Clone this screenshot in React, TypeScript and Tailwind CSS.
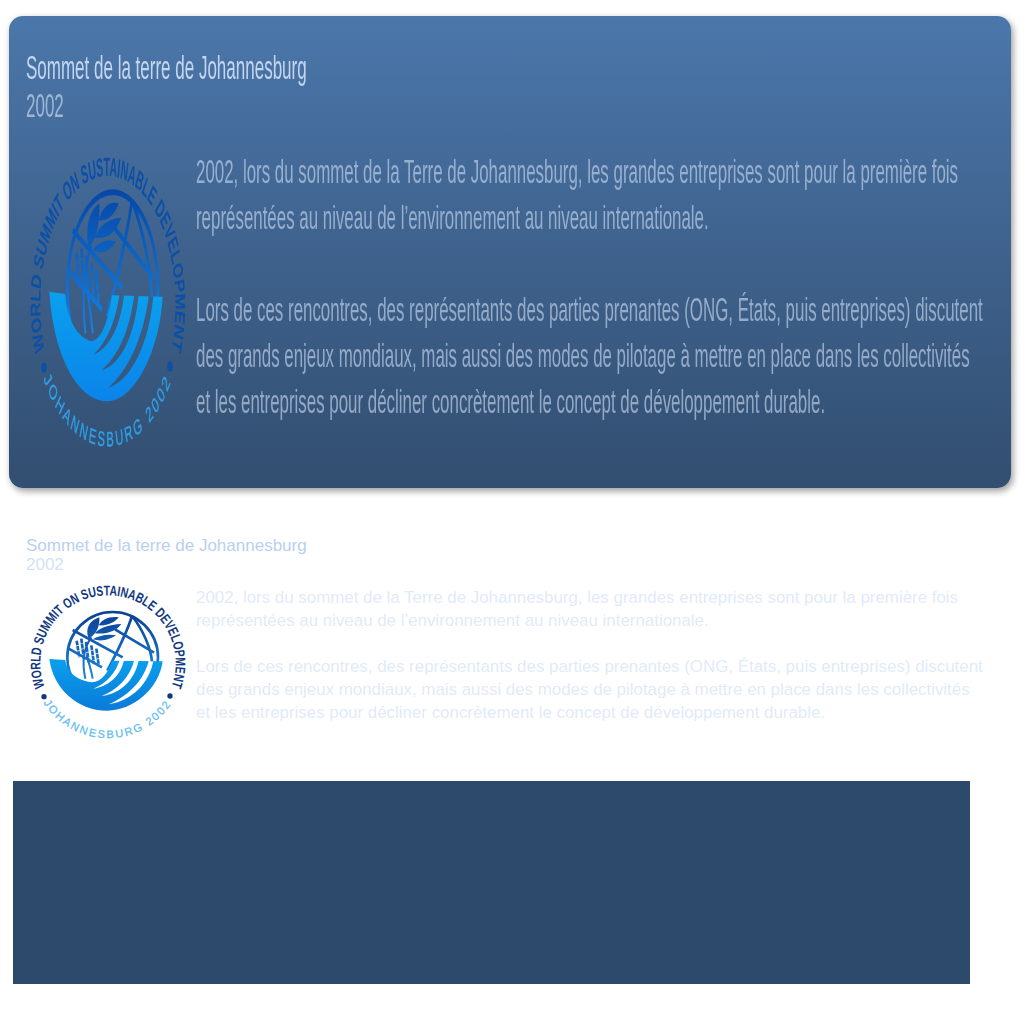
import React from 'react';

type LogoProps = { id: string; stretched?: boolean };

const Logo: React.FC<LogoProps> = ({ id, stretched }) => {
  const ringColor = stretched ? '#0b4fa6' : '#12397f';
  const cityColor = stretched ? '#2f9fe8' : '#62bdf0';
  const ringTransform = stretched ? 'translate(0 12) scale(1 .946)' : undefined;
  const innerTransform = stretched ? 'translate(0 -22) scale(1 1.06)' : undefined;

  return (
    <svg viewBox="0 0 525 495" className="w-[175px] h-[165px] shrink-0">
      <defs>
        <linearGradient id={`${id}-globe`} gradientUnits="userSpaceOnUse" x1="0" y1="96" x2="0" y2="300">
          <stop offset="0" stopColor={stretched ? '#0648a8' : '#0b3f93'} />
          <stop offset="1" stopColor={stretched ? '#1484e6' : '#1a86dc'} />
        </linearGradient>
        <linearGradient id={`${id}-hand`} x1="0" y1="0" x2="0" y2="1">
          <stop offset="0" stopColor="#0aa0ee" />
          <stop offset="1" stopColor={stretched ? '#0b84ea' : '#0a7ad8'} />
        </linearGradient>
        <mask id={`${id}-gaps`} maskUnits="userSpaceOnUse" x="0" y="0" width="525" height="495">
          <rect width="525" height="495" fill="white" />
          <path d="M300 236 L313 236 C304 285 268 318 220 326 C258 310 288 280 300 236Z" fill="black" />
          <path d="M344 236 L357 236 C346 298 304 340 245 348 C290 330 330 295 344 236Z" fill="black" />
          <path d="M388 236 L401 236 C390 310 335 362 265 373 C320 350 372 305 388 236Z" fill="black" />
        </mask>
        <clipPath id={`${id}-upper`}>
          <rect x="120" y="80" width="320" height="225" />
        </clipPath>
        <path id={`${id}-top`} d="M74 321 A203 203 0 1 1 454 320" />
        <path id={`${id}-bottom`} d="M70 368 A228 228 0 0 0 456 368" />
      </defs>

      <g transform={ringTransform}>
        <text fontFamily="'Liberation Sans', sans-serif" fontWeight="700" fontSize="42" fill={ringColor}>
          <textPath href={`#${id}-top`} textLength="783" lengthAdjust="spacingAndGlyphs">
            WORLD SUMMIT ON SUSTAINABLE DEVELOPMENT
          </textPath>
        </text>
        <text fontFamily="'Liberation Sans', sans-serif" fontSize="33" fill={cityColor} stroke={cityColor} strokeWidth="0.8">
          <textPath href={`#${id}-bottom`} textLength="452" lengthAdjust="spacing">
            JOHANNESBURG 2002
          </textPath>
        </text>
        <circle cx="72" cy="350" r="8" fill={ringColor} />
        <circle cx="450" cy="348" r="8" fill={ringColor} />
      </g>

      <g transform={innerTransform}>
        <g clipPath={`url(#${id}-upper)`} fill="none" stroke={`url(#${id}-globe)`} strokeWidth="8">
          <circle cx="278" cy="232" r="136" />
          <path d="M158 150 L308 232 M285 148 L402 218 M146 206 L246 262" />
          <path d="M336 108 C320 160 292 215 262 272 M336 108 C370 150 392 205 396 244" />
        </g>
        <g fill={`url(#${id}-globe)`}>
          <path d="M206 176 C194 146 208 122 238 112 C240 138 230 162 206 176Z" />
          <path d="M236 136 C246 118 268 108 296 112 C284 128 262 138 236 136Z" />
          <path d="M224 160 C240 142 266 134 304 132 C290 152 262 164 224 160Z" />
          <path d="M218 178 C238 166 262 162 288 166 C272 178 246 186 218 178Z" />
        </g>
        <g fill="none" stroke={`url(#${id}-globe)`} strokeWidth="8" strokeDasharray="14 2">
          <path d="M170 182 L178 232" />
          <path d="M184 176 L192 240" />
          <path d="M198 186 L206 248" />
          <path d="M214 196 L222 252" />
          <path d="M229 206 L236 254" />
        </g>
        <path d="M196 296 C186 250 190 205 214 172 M218 296 C214 270 205 245 200 225" fill="none" stroke={`url(#${id}-globe)`} strokeWidth="6" />
        <path
          mask={`url(#${id}-gaps)`}
          fill={`url(#${id}-hand)`}
          d="M88 237 L136 240 C138 265 160 300 215 307 C245 305 265 278 276 242 L428 244 C418 325 340 392 262 392 C170 392 100 325 88 237Z"
        />
      </g>
    </svg>
  );
};

const Summit: React.FC<{ stretched?: boolean }> = ({ stretched }) => (
  <div className="font-['Liberation_Sans',sans-serif]">
    <h2 className={`text-[17px] leading-[19px] font-normal whitespace-nowrap ${stretched ? '-mt-[1px] text-[#c4d6ee]' : '-mt-[0.5px] text-[#b9d0ef]'}`}>
      Sommet de la terre de Johannesburg
    </h2>
    <p className={`text-[17px] leading-[19px] ${stretched ? 'text-[#c4d6ee]/70' : 'text-[#b9d0ef]/65'}`}>2002</p>
    <div className="flex mt-[6.5px]">
      <div className="w-[176px] -ml-[6px] shrink-0">
        <Logo id={stretched ? 'logo-a' : 'logo-b'} stretched={stretched} />
      </div>
      <div className={`text-[16.9px] leading-[23px] whitespace-nowrap mt-[5.5px] ${stretched ? 'text-[#c4d6ee]/65' : 'text-[#b9d0ef]/45'}`}>
        <p>2002, lors du sommet de la Terre de Johannesburg, les grandes entreprises sont pour la première fois</p>
        <p>représentées au niveau de l’environnement au niveau internationale.</p>
        <p className="mt-[23px]">Lors de ces rencontres, des représentants des parties prenantes (ONG, États, puis entreprises) discutent</p>
        <p>des grands enjeux mondiaux, mais aussi des modes de pilotage à mettre en place dans les collectivités</p>
        <p>et les entreprises pour décliner concrètement le concept de développement durable.</p>
      </div>
    </div>
  </div>
);

export default function App() {
  return (
    <div className="w-[1024px] h-[1024px] bg-white overflow-hidden pt-[16px]">
      <div className="ml-[9px] w-[1002px] h-[472px] rounded-[14px] bg-gradient-to-b from-[#4b77ab] to-[#324e70] shadow-[2px_3px_7px_rgba(0,0,0,0.4)] pt-[34px] pl-[17px]">
        <div className="h-[236px] origin-top scale-y-[2]">
          <Summit stretched />
        </div>
      </div>
      <div className="mt-[48px] pl-[26px] h-[245px]">
        <Summit />
      </div>
      <div className="ml-[12.5px] w-[957.5px] h-[203px] bg-[#2d4a6d]" />
    </div>
  );
}
